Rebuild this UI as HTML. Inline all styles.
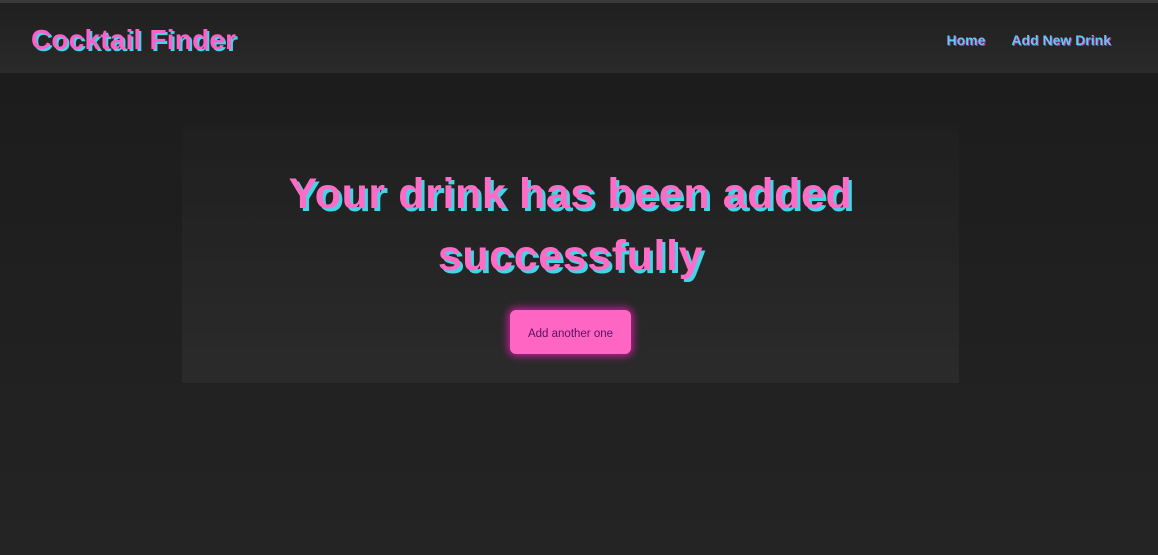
<!DOCTYPE html>
<html><head><style>
html,body{margin:0;padding:0;width:1158px;height:555px;overflow:hidden;font-family:"Comic Sans MS","Liberation Sans",sans-serif;background:linear-gradient(#1b1b1b,#242424);}
.top{height:3px;background:#3a3a3a}
header{height:70px;background:linear-gradient(#1f1f1f,#2a2a2a);position:relative}
.logo{position:absolute;left:31px;top:21px;font-size:28px;font-weight:bold;color:#ff5fc8;text-shadow:2px 2px 0 #3fd6e8;letter-spacing:0.2px}
nav{position:absolute;right:47px;top:29px;font-size:14px;font-weight:bold;color:#5ecaf5;text-shadow:1px 1px 0 #c0309a}
nav span{margin-left:26px}
.card{position:absolute;left:182px;top:125px;width:777px;height:258px;background:linear-gradient(#1f1f1f,#2b2b2b)}
h1{margin:0;position:absolute;left:0;right:0;top:38px;text-align:center;font-size:43px;line-height:62px;font-weight:bold;color:#ff6cc6;text-shadow:3px 3px 0 #3fd6e8;letter-spacing:0.6px}
.btn{position:absolute;left:328px;top:185px;width:121px;height:44px;border-radius:6px;background:#ff66c4;box-shadow:0 0 8px 2px #c2209a;color:#5a1060;font-size:11.5px;text-align:center;line-height:48px}
</style></head><body>
<div class="top"></div>
<header><div class="logo">Cocktail Finder</div><nav><span>Home</span><span>Add New Drink</span></nav></header>
<div class="card"><h1>Your drink has been added<br>successfully</h1><div class="btn">Add another one</div></div>
</body></html>
